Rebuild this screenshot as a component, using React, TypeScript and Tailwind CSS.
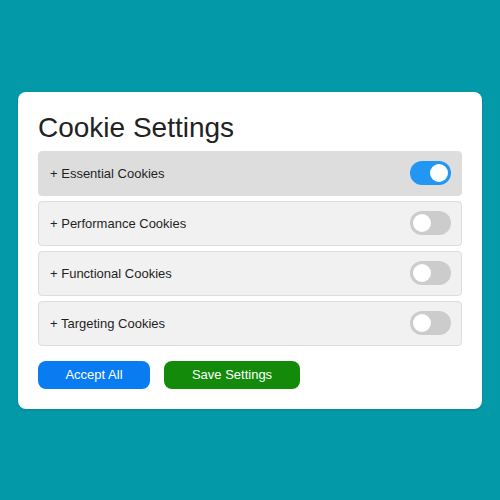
import React, { useState } from 'react';

const rows = [
  { name: 'Essential Cookies', on: true, active: true },
  { name: 'Performance Cookies', on: false, active: false },
  { name: 'Functional Cookies', on: false, active: false },
  { name: 'Targeting Cookies', on: false, active: false },
];

const Toggle: React.FC<{ on: boolean; onClick: () => void }> = ({ on, onClick }) => (
  <button
    onClick={onClick}
    className={`relative w-[41px] h-[24px] rounded-full ${on ? 'bg-[#2196f3]' : 'bg-[#cccccc]'}`}
  >
    <span
      className={`absolute top-[3px] w-[18px] h-[18px] rounded-full bg-white ${on ? 'left-[20px]' : 'left-[3px]'}`}
    />
  </button>
);

export default function App() {
  const [state, setState] = useState(rows.map((r) => r.on));

  return (
    <div
      className="w-[500px] h-[500px] bg-[#0499a9] flex items-center justify-center"
      style={{ fontFamily: '"Liberation Sans", Arial, sans-serif' }}
    >
      <div className="w-[464px] bg-white rounded-lg px-5 pt-5 pb-5 shadow-sm">
        <h2 className="text-[28px] leading-[31px] text-[#222222] mb-2">Cookie Settings</h2>
        <div className="flex flex-col gap-[5px]">
          {rows.map((r, i) => (
            <div
              key={r.name}
              className={`h-[45px] flex items-center justify-between pl-[11px] pr-[10px] rounded border border-[#dddddd] ${
                r.active ? 'bg-[#dddddd]' : 'bg-[#f1f1f1]'
              }`}
            >
              <span className="text-[13px] text-[#1f1f1f] pt-px">+ {r.name}</span>
              <Toggle
                on={state[i]}
                onClick={() => setState((s) => s.map((v, j) => (j === i ? !v : v)))}
              />
            </div>
          ))}
        </div>
        <div className="flex gap-[14px] mt-[15px]">
          <button className="h-[28px] w-[112px] rounded-lg bg-[#0a7cf2] text-white text-[13px] pt-px">
            Accept All
          </button>
          <button className="h-[28px] w-[136px] rounded-lg bg-[#148a0a] text-white text-[13px] pt-px">
            Save Settings
          </button>
        </div>
      </div>
    </div>
  );
}
